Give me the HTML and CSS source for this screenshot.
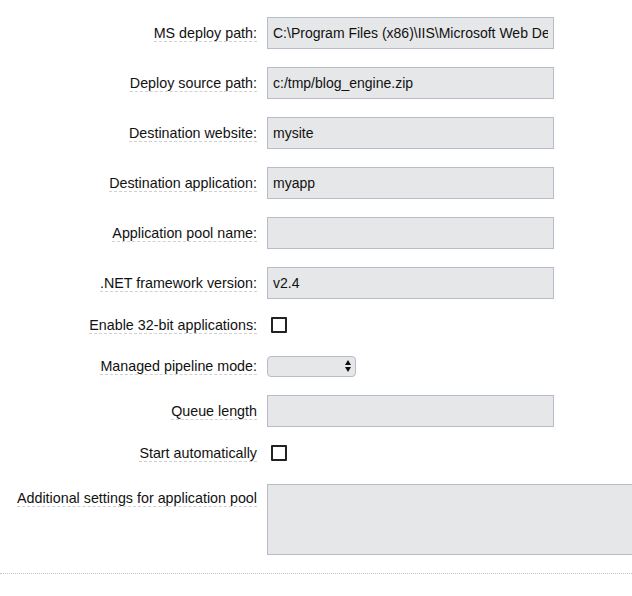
FILE: index.html
```html
<!DOCTYPE html>
<html>
<head>
<meta charset="utf-8">
<link rel="stylesheet" href="styles.css">
</head>
<body>
<form class="form">
  <div class="row row-text">
    <div class="label"><span class="lbl">MS deploy path:</span></div>
    <input class="field" type="text" value="C:\Program Files (x86)\IIS\Microsoft Web Deploy V3\msdeploy.exe">
  </div>
  <div class="row row-text">
    <div class="label"><span class="lbl">Deploy source path:</span></div>
    <input class="field" type="text" value="c:/tmp/blog_engine.zip">
  </div>
  <div class="row row-text">
    <div class="label"><span class="lbl">Destination website:</span></div>
    <input class="field" type="text" value="mysite">
  </div>
  <div class="row row-text">
    <div class="label"><span class="lbl">Destination application:</span></div>
    <input class="field" type="text" value="myapp">
  </div>
  <div class="row row-text">
    <div class="label"><span class="lbl">Application pool name:</span></div>
    <input class="field" type="text" value="">
  </div>
  <div class="row row-text">
    <div class="label"><span class="lbl">.NET framework version:</span></div>
    <input class="field" type="text" value="v2.4">
  </div>
  <div class="row row-check">
    <div class="label"><span class="lbl">Enable 32-bit applications:</span></div>
    <input class="check" type="checkbox">
  </div>
  <div class="row row-select">
    <div class="label label-select"><span class="lbl">Managed pipeline mode:</span></div>
    <div class="select-wrap">
      <select class="select"><option></option><option>Integrated</option><option>Classic</option></select>
      <svg class="arrows" width="6" height="12" viewBox="0 0 6 12"><path d="M3 0 L6 5 L0 5 Z M0 7 L6 7 L3 12 Z" fill="#111"/></svg>
    </div>
  </div>
  <div class="row row-text">
    <div class="label"><span class="lbl">Queue length</span></div>
    <input class="field" type="text" value="">
  </div>
  <div class="row row-check">
    <div class="label"><span class="lbl">Start automatically</span></div>
    <input class="check" type="checkbox">
  </div>
  <div class="row row-area">
    <div class="label label-area"><span class="lbl">Additional settings for application pool</span></div>
    <textarea class="area"></textarea>
  </div>
</form>
</body>
</html>
```
FILE: styles.css
```css
html, body {
  margin: 0;
  padding: 0;
  background: #fff;
  overflow: hidden;
}
body {
  font-family: "Liberation Sans", Arial, Helvetica, sans-serif;
  font-size: 14px;
  color: #111;
}
.form {
  display: flex;
  flex-direction: column;
  gap: 18px;
  padding: 17px 0 18px 0;
  border-bottom: 1px dotted #c4c4c4;
  overflow: hidden;
  width: 632px;
}
.row {
  display: flex;
  gap: 10px;
}
.row-text {
  align-items: baseline;
}
.row-check {
  align-items: flex-start;
  height: 21px;
}
.row-select {
  align-items: center;
}
.row-area {
  align-items: flex-start;
}
.label {
  width: 257px;
  flex: none;
  text-align: right;
  white-space: nowrap;
  line-height: 16px;
}
.label-select {
  padding-bottom: 2px;
}
.label-area {
  padding-top: 6px;
}
.lbl {
  border-bottom: 1px dashed #d0d0d0;
  font-size: 14.3px;
}
.field {
  box-sizing: border-box;
  width: 287px;
  height: 32px;
  margin: 0;
  padding: 0 5px;
  border: 1px solid #b7bcc8;
  border-radius: 0;
  background: #e6e7e9;
  font-family: "Liberation Sans", Arial, Helvetica, sans-serif;
  font-size: 14px;
  color: #111;
  outline: none;
}
.check {
  appearance: none;
  -webkit-appearance: none;
  box-sizing: border-box;
  width: 16px;
  height: 16px;
  margin: 0 0 0 4px;
  border: 2px solid #222;
  border-radius: 1px;
  background: #fff;
}
.select-wrap {
  position: relative;
  width: 89px;
  height: 21px;
}
.select {
  appearance: none;
  -webkit-appearance: none;
  box-sizing: border-box;
  width: 89px;
  height: 21px;
  margin: 0;
  border: 1px solid #b7bcc8;
  border-radius: 4px;
  background: #e6e7e9;
  font-family: "Liberation Sans", Arial, sans-serif;
  font-size: 13px;
  color: transparent;
}
.arrows {
  position: absolute;
  left: 78px;
  top: 4px;
  pointer-events: none;
}
.area {
  box-sizing: border-box;
  flex: none;
  width: 420px;
  height: 71px;
  margin: 0;
  padding: 5px;
  border: 1px solid #b7bcc8;
  border-radius: 0;
  background: #e6e7e9;
  resize: none;
  font-family: "Liberation Sans", Arial, sans-serif;
  font-size: 14px;
}
```
